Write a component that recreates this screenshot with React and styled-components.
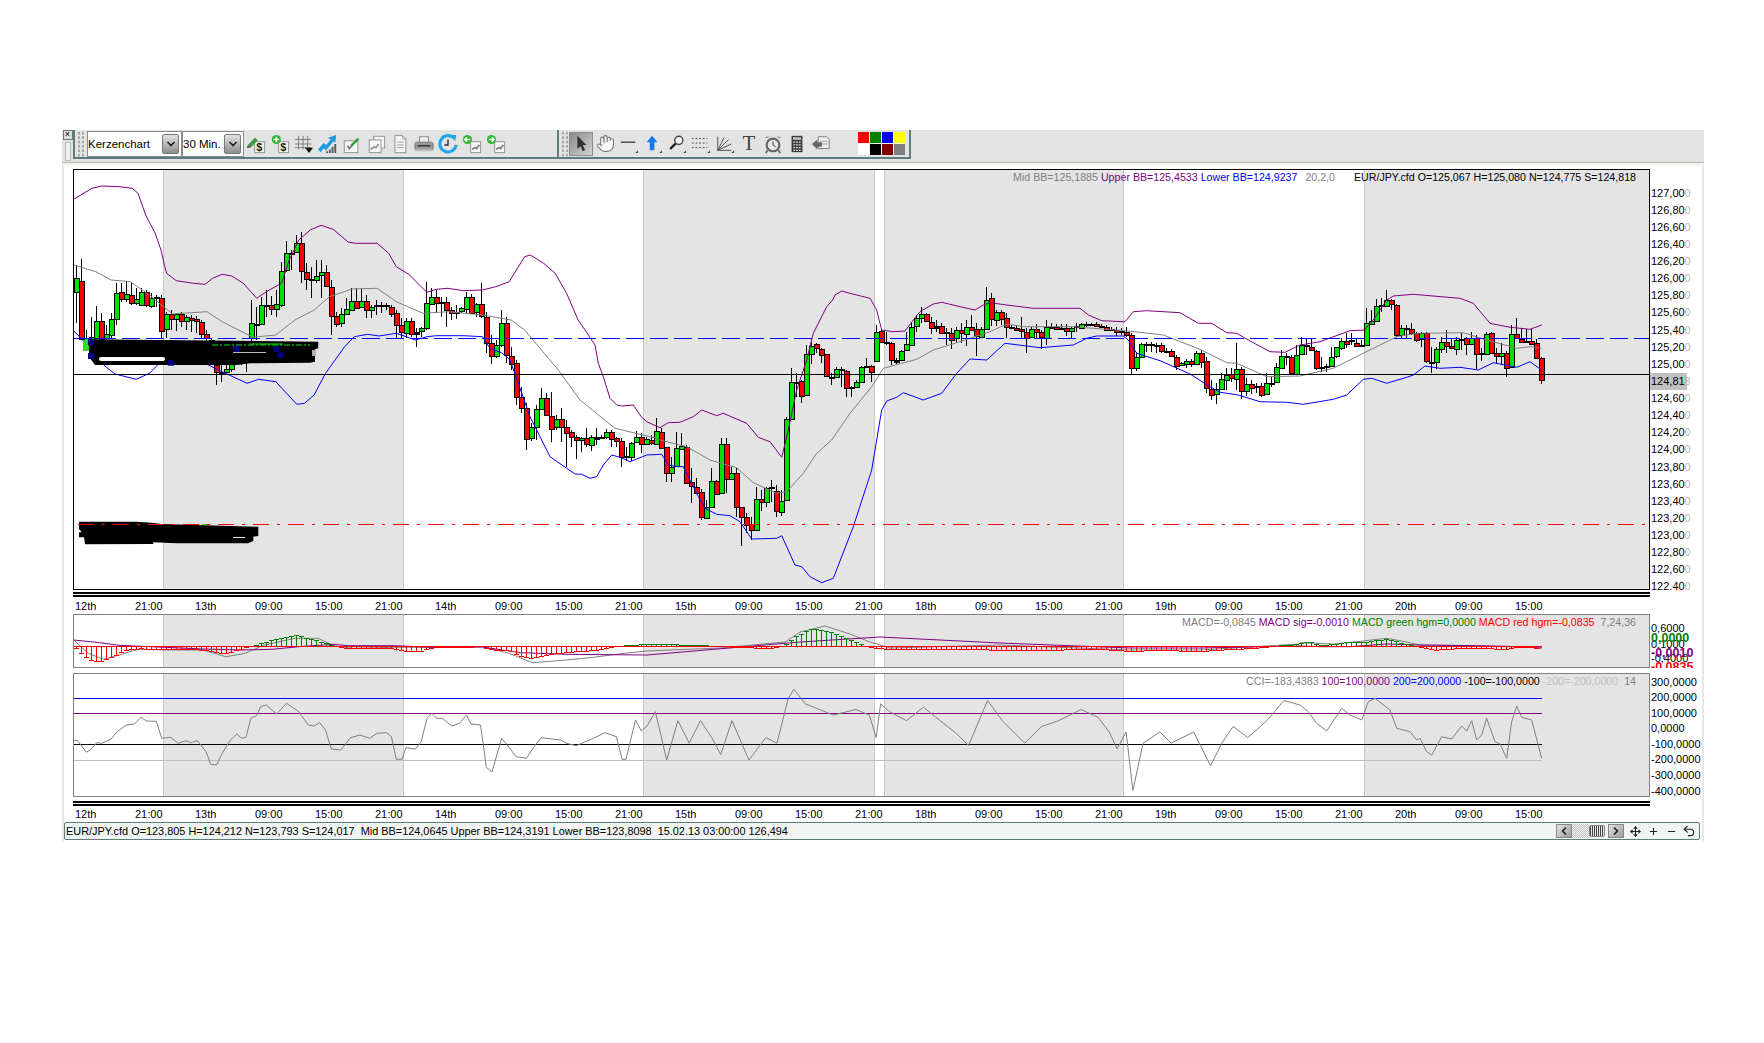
import React from "react";
import styled, { createGlobalStyle } from "styled-components";
import { ChevronDown, ChevronLeft, ChevronRight, Move, Plus, Minus, Undo2, Hand } from "lucide-react";

const GlobalStyle = createGlobalStyle`
  html, body { margin: 0; padding: 0; background: #fff; }
  body { font-family: "Liberation Sans", Arial, sans-serif; font-size: 11px; color: #000; }
`;

const Page = styled.div`
  width: 1764px;
  height: 1043px;
  padding: 130px 0 0 62px;
  box-sizing: border-box;
  overflow: hidden;
`;

const Window = styled.div`
  width: 1642px;
  display: flex;
  flex-direction: column;
`;

const Toolbar = styled.div`
  height: 32px;
  display: flex;
  align-items: flex-start;
  background: #e3e3e3;
  border-bottom: 1px solid #b8b8a8;
`;

const CloseCol = styled.div`
  width: 11px;
  display: flex;
  flex-direction: column;
  align-items: center;
  gap: 2px;
`;

const CloseBox = styled.div`
  width: 8px;
  height: 8px;
  border: 1px solid #777;
  background: #ddd;
  font-size: 9px;
  line-height: 7px;
  text-align: center;
`;

const Handle = styled.div`
  width: 4px;
  height: 17px;
  background: #efefef;
  border: 1px solid #bbb;
`;

const ToolGroup = styled.div`
  height: 29px;
  width: ${(p) => p.$w}px;
  display: flex;
  align-items: center;
  box-sizing: border-box;
  border-left: 2px solid #5e7c7a;
  border-right: ${(p) => (p.$end ? "2px solid #5e7c7a" : "none")};
  border-bottom: 2px solid #5e7c7a;
`;

const Grip = styled.div`
  width: 8px;
  height: 26px;
  margin-left: 2px;
  flex: none;
  background-image: radial-gradient(circle, #a8a8a8 1.1px, transparent 1.3px);
  background-size: 4px 4.4px;
`;

const Select = styled.div`
  height: 26px;
  width: ${(p) => p.$w}px;
  box-sizing: border-box;
  margin-left: ${(p) => p.$ml || 0}px;
  display: flex;
  align-items: center;
  justify-content: space-between;
  padding: 0 2px 0 0;
  background: #fff;
  border: 1px solid #8a8a8a;
  font-size: 11.5px;
  flex: none;
`;

const SelectArrow = styled.div`
  width: 15px;
  height: 18px;
  display: flex;
  align-items: center;
  justify-content: center;
  border: 1px solid #777;
  border-radius: 2px;
  background: linear-gradient(#e2e2e2, #8e8e8e);
`;

const Slot = styled.div`
  width: 24px;
  height: 24px;
  flex: none;
  display: flex;
  align-items: center;
  justify-content: center;
  position: relative;
`;

const ActiveSlot = styled(Slot)`
  box-sizing: border-box;
  border: 1px solid #8a8a8a;
  background: linear-gradient(135deg, #8a8a8a, #d4d4d4);
`;

const SerifT = styled.span`
  font-family: "Liberation Serif", serif;
  font-size: 21px;
  color: #444;
  line-height: 1;
`;

const Palette = styled.div`
  margin-left: 25px;
  display: grid;
  grid-template-columns: repeat(4, 11px);
  grid-auto-rows: 11px;
  gap: 1px;
  padding: 0;
  background: #f4f4f4;
`;

const Swatch = styled.div`
  background: ${(p) => p.$c};
`;

const Workspace = styled.div`
  display: flex;
  flex-direction: column;
  border-top: 3px solid #f2f2f2;
  border-left: 2px solid #e8e8e8;
  border-right: 2px solid #e8e8e8;
  padding-top: 3px;
  padding-bottom: 2px;
`;

const Charts = styled.div`
  display: flex;
  flex-direction: column;
  padding-left: 9px;
`;

const ChartRow = styled.div`
  display: flex;
  margin-top: ${(p) => p.$mt || 0}px;
`;

const Plot = styled.div`
  position: relative;
  width: 1577px;
  height: ${(p) => p.$h}px;
  flex: none;
  background: #fff;
  svg { display: block; }
  &::after {
    content: "";
    position: absolute;
    inset: 0;
    box-sizing: border-box;
    border: ${(p) => (p.$main ? "1.5px solid #000" : "1.5px solid #808080")};
    pointer-events: none;
  }
`;

const Legend = styled.div`
  position: absolute;
  top: ${(p) => p.$top}px;
  right: 14px;
  display: flex;
  gap: 3px;
  font-size: 10.65px;
  line-height: 13px;
  white-space: pre;
  z-index: 1;
`;

const Tone = styled.span`
  color: ${(p) => p.$c};
  margin-left: ${(p) => p.$ml || 0}px;
`;

const AxisCol = styled.div`
  position: relative;
  width: 52px;
  height: ${(p) => p.$h}px;
  padding-top: ${(p) => p.$pt}px;
  box-sizing: border-box;
  overflow: hidden;
  flex: none;
`;

const AxisLabel = styled.div`
  height: ${(p) => p.$step}px;
  line-height: ${(p) => p.$step}px;
  padding-left: 1px;
  white-space: pre;
  width: ${(p) => (p.$hot ? "36px" : "auto")};
  background: ${(p) => (p.$hot ? "#c0c0c0" : "transparent")};
`;

const Faint = styled.span`
  color: #b4b4b4;
  font-size: 10px;
`;

const MacdTick = styled.div`
  position: absolute;
  left: 1px;
  top: ${(p) => p.$y}px;
  line-height: 13px;
  color: ${(p) => p.$c || "#000"};
  font-weight: ${(p) => (p.$bold ? 700 : 400)};
  font-size: ${(p) => (p.$bold ? "12.5px" : "11px")};
`;

const TimeAxis = styled.div`
  width: 1577px;
  height: ${(p) => p.$h}px;
  box-sizing: border-box;
  margin-top: ${(p) => p.$mt}px;
  border-top: 5px double #000;
  display: grid;
  grid-template-columns: repeat(25, 60px);
  padding-left: 2px;
  align-items: center;
`;

const StatusBar = styled.div`
  width: 1636px;
  height: 18px;
  box-sizing: border-box;
  display: flex;
  align-items: center;
  padding: 0 1px 0 1px;
  background: #f0f4f2;
  border: 1px solid #5e7c7a;
  border-radius: 2px;
  white-space: pre;
  font-size: 10.9px;
`;

const StatusControls = styled.div`
  margin-left: auto;
  display: flex;
  align-items: center;
`;

const NavButton = styled.div`
  width: 16px;
  height: 14px;
  display: flex;
  align-items: center;
  justify-content: center;
  background: linear-gradient(135deg, #e4e4e4, #9a9a9a);
  border: 1px solid #888;
  box-sizing: border-box;
  margin-right: ${(p) => p.$mr || 0}px;
`;

const Dither = styled.div`
  width: 17px;
  height: 14px;
  background-image: repeating-conic-gradient(#c4c4c4 0 25%, #f0f4f2 0 50%);
  background-size: 2px 2px;
`;

const Thumb = styled.div`
  width: 16px;
  height: 12px;
  border: 1px solid #888;
  border-radius: 2px;
  box-sizing: border-box;
  margin-right: 3px;
  background: repeating-linear-gradient(90deg, #444 0 1px, #e8e8e8 1px 2px);
`;

const NavIcon = styled.div`
  width: 18px;
  display: flex;
  justify-content: center;
  align-items: center;
`;

// every trace below was read off at 3x, so it gets mapped back to page pixels
const trace = (pts, ox, oy, sx = 3, sy = 3) => pts.map(([x, y]) => [ox + x / sx, oy + y / sy]);
const Z1 = 2.613;

const segments = [
  { oy: 230, rows: [
    ["g",145,187,105,280],["r",152,325,88,326],["g",325,350,300,352],["g",320,370,262,372],["g",273,325,228,360],["r",272,325,250,360],
    ["g",312,325,285,340],["g",268,315,248,325],["g",190,268,160,285],["r",187,208,160,215],["g",193,208,153,215],["r",195,220,160,225],
    ["g",208,220,175,225],["g",187,225,175,228],["r",187,226,180,230],["g",203,226,190,235],["f",202,204,195,230],["r",203,301,195,325],
    ["g",253,298,245,325],["r",253,268,240,300],["g",253,268,248,303],["r",253,275,245,290],["g",262,275,255,300],["r",263,268,255,305],
    ["r",268,275,258,310],["r",275,312,270,325],["r",312,325,300,345],["g",330,360,325,380],["r",405,425,380,465],["f",425,427,380,455],
    ["g",418,428,400,430],["g",385,418,360,425],["g",350,385,345,390],["r",350,380,345,405],["r",350,380,345,425],["g",280,325,210,360],
    ["f",281,283,230,330],["g",226,283,200,285],["f",224,226,180,260],["r",226,238,198,255],["g",223,238,180,262],["g",122,223,95,230],
    ["g",70,122,33,125],["f",68,70,60,120],["g",40,68,15,70],["r",40,125,5,160],["r",125,145,100,180],["f",148,150,110,205],
    ["g",137,150,90,160],["g",127,137,90,205],["r",127,168,105,172],["r",170,257,150,315],["r",257,280,245,290],["g",253,280,235,292],
    ["g",238,253,205,255],["g",212,238,175,240],["r",212,232,175,235],["g",212,230,175,232],["r",212,240,195,265],["g",230,238,225,265],
    ["f",226,229,210,255],["f",226,229,215,250],["f",226,228,220,240],["r",230,250,225,262],["r",248,285,240,325],["r",285,306,265,325],
  ]},
  { oy: 120, rows: [
    ["g",602,637,595,655],["r",602,642,595,650],["f",637,642,625,680],["g",625,635,620,650],["g",550,625,487,630],["g",530,550,505,555],
    ["r",530,547,510,575],["f",545,548,530,590],["r",547,570,530,620],["r",570,578,560,600],["r",575,578,555,598],["g",565,575,560,580],
    ["g",530,565,515,578],["r",530,578,522,580],["g",553,578,550,590],["r",553,590,490,595],["r",592,670,575,700],
  ]},
  { oy: 330, rows: [
    ["r",40,78,15,103],["g",44,78,30,85],["g",-21,44,-60,50],["r",-21,75,-40,100],["r",77,100,50,120],["r",100,202,90,225],
    ["r",202,235,170,250],["r",235,327,220,360],["g",292,325,280,332],["g",238,292,225,330],["g",205,238,175,240],["r",205,257,190,258],
    ["r",257,295,187,335],["g",268,292,255,300],["r",268,292,235,335],["r",290,307,270,412],["r",307,322,300,352],["r",322,332,315,387],
    ["g",325,330,320,365],["r",325,343,293,350],["g",320,343,315,362],["f",320,325,293,345],["f",322,325,315,328],["g",305,320,298,328],
    ["r",305,325,300,352],["r",325,333,320,350],["r",333,382,325,410],["f",379,381,350,392],["g",338,380,335,393],["g",320,335,303,340],
    ["r",322,343,310,368],["g",328,343,322,345],["r",330,340,315,345],["g",302,342,265,345],["r",305,352,295,355],["r",352,430,350,455],
    ["g",412,430,380,457],["g",355,410,305,412],["g",347,355,308,358],["r",350,457,345,458],["r",457,470,415,518],["r",470,487,445,490],
    ["r",487,563,478,570],["g",530,563,510,568],["g",452,530,415,530],["r",452,490,450,492],["g",343,490,325,492],["r",343,448,323,488],
  ]},
  { oy: 300, rows: [
    ["g",518,535,500,536],["r",520,622,505,650],["r",622,652,620,737],["r",652,675,640,700],["r",672,690,650,720],["g",596,690,560,692],
    ["r",598,606,570,632],["g",563,606,560,620],["f",562,564,540,605],["r",572,632,555,652],["g",602,634,570,648],["g",358,602,350,603],
    ["g",247,358,205,360],["f",246,248,218,290],["r",243,287,240,310],["g",163,287,135,288],["g",138,163,125,193],["r",133,145,130,160],
    ["r",146,163,145,190],["r",163,230,162,232],["f",230,232,220,255],["g",208,232,200,233],["f",207,209,200,262],["r",212,262,210,292],
    ["f",260,262,258,290],["g",245,260,240,262],["g",200,245,198,247],["f",197,199,175,200],["r",197,214,195,245],["g",95,181,75,183],
    ["r",93,127,90,128],["f",126,128,95,135],["r",128,180,125,195],["f",180,186,175,192],["g",152,180,150,182],["g",133,152,95,153],
    ["g",80,133,65,135],["g",55,80,45,95],["g",43,55,20,70],["r",43,65,40,67],["r",65,82,50,102],["f",77,82,60,95],
    ["r",77,97,70,100],["f",95,97,85,135],["r",98,120,85,148],["g",90,115,80,125],["r",90,100,70,128],["g",80,100,60,138],
    ["r",80,88,45,90],["r",88,108,70,168],["g",88,112,80,115],["g",0,88,-40,90],["r",-5,58,-20,78],["g",35,58,30,78],
    ["r",35,55,30,75],["r",55,82,38,113],["f",80,82,75,85],["r",83,90,75,92],["r",88,93,50,115],["r",95,112,85,158],
    ["g",87,112,80,115],["r",87,97,72,117],["r",97,112,90,148],["g",80,112,60,135],["f",80,82,70,85],["r",82,88,72,90],
    ["f",83,86,72,90],["r",83,93,72,108],["g",85,93,80,115],["f",78,80,70,95],["g",73,85,68,87],["f",72,75,66,80],
    ["f",72,74,68,78],["r",73,80,66,82],["f",78,80,72,85],["r",80,88,76,92],["f",86,88,82,94],["r",90,95,80,107],
    ["f",92,94,85,105],["r",95,103,80,110],["r",105,205,98,222],["g",172,205,155,212],
  ]},
  { oy: 290, rows: [
    ["g",163,202,158,205],["f",163,166,155,185],["f",163,166,155,185],["f",164,166,158,190],["r",166,183,160,188],["f",182,184,175,190],
    ["r",182,198,178,202],["r",200,226,195,240],["g",220,226,215,228],["g",212,220,208,235],["r",212,222,207,232],["g",188,222,182,226],
    ["r",188,214,180,235],["r",214,296,200,310],["r",296,313,270,330],["g",298,313,280,342],["g",268,298,248,300],["g",254,270,235,300],
    ["r",252,265,235,275],["g",236,265,160,300],["r",236,301,230,328],["g",281,301,265,318],["r",281,292,270,312],["f",288,291,280,310],
    ["r",287,313,280,322],["g",280,313,250,315],["f",279,281,262,290],["g",232,278,220,280],["g",197,232,180,235],["f",197,200,190,225],
    ["r",202,250,195,252],["g",194,250,165,252],["g",166,194,142,196],["f",166,168,145,195],["r",170,178,145,180],["r",182,234,180,240],
    ["f",232,235,200,245],["f",228,230,222,245],["g",200,228,170,230],["g",172,200,170,203],["g",152,172,145,180],["r",152,160,130,175],
    ["f",151,153,130,165],["r",158,167,145,172],["f",164,166,150,170],["g",100,165,55,167],["g",92,100,60,102],["g",48,92,28,94],
    ["f",46,49,25,65],["g",30,48,0,50],["r",30,42,28,60],["r",44,135,42,140],["g",113,135,105,148],["f",113,115,105,148],
    ["r",118,130,98,135],["r",130,150,125,155],["g",130,148,125,170],["r",130,215,125,218],["f",215,217,170,250],["g",176,215,170,238],
    ["g",156,176,140,190],["r",156,168,120,190],["r",168,175,145,178],["g",150,178,140,195],["f",146,148,128,180],["r",145,162,140,195],
    ["g",145,163,125,165],["r",144,192,135,238],["r",188,192,175,212],["g",133,192,125,195],["r",130,190,125,192],["r",190,198,175,222],
    ["g",188,198,160,222],["r",188,232,183,262],["g",133,232,105,234],["r",133,145,85,147],["r",146,155,118,157],["f",152,154,118,158],
    ["r",152,160,118,162],["r",160,205,148,207],["r",205,272,200,282],
  ]},
];

const candles = segments.flatMap((s) =>
  s.rows.map(([kind, top, bot, hi, lo]) => ({
    kind,
    top: s.oy + top / 3,
    bot: s.oy + bot / 3,
    hi: s.oy + hi / 3,
    lo: s.oy + lo / 3,
  }))
).map((c, i) => ({ ...c, x: 76 + i * 5 }));

const upperBB = [
  ...trace([[62,238],[80,225],[110,205],[135,198],[180,200],[215,205],[230,220],[250,285],[275,340],[290,390],[300,440],[305,460],[330,482],[375,490],[405,493],[425,475],[450,463],[475,468],[505,490],[540,535],[565,515],[605,490],[625,420],[650,360],[680,330],[708,316],[740,328],[780,367],[800,370],[855,370],[885,400],[905,440],[940,465],[965,495],[985,517],[1010,508],[1040,505],[1080,512],[1130,510],[1165,500],[1200,485],[1240,410],[1255,405],[1290,430],[1320,460],[1350,520],[1380,600]], 50, 120, Z1),
  ...trace([[465,0],[495,45],[505,100],[520,140],[540,205],[560,225],[575,228],[610,225],[635,262]], 430, 330),
  ...trace([[20,365],[60,383],[85,368],[120,367],[160,350],[185,330],[230,347],[250,340],[320,370],[355,412],[390,425],[425,472],[445,390],[470,270],[500,180],[520,100],[560,20],[578,0]], 640, 300),
  ...trace([[885,525],[905,513],[930,520],[990,535],[1010,570]], 540, 120),
  ...trace([[715,50],[725,90],[760,95],[795,93],[820,60],[840,35],[880,12],[905,7],[960,20],[1005,30],[1030,15],[1050,8],[1100,15],[1180,25],[1320,25],[1345,45],[1385,62],[1450,65]], 640, 300),
  ...trace([[15,95],[40,65],[80,62],[180,68],[235,100],[275,100],[320,128],[350,130],[385,150],[450,185],[495,187],[540,165],[600,155],[690,122],[733,120],[760,90],[800,30],[820,18],[880,13],[1020,25],[1060,40],[1110,100],[1170,112],[1230,118],[1265,105]], 1120, 290),
];

const midBB = [
  ...trace([[62,435],[120,455],[160,480],[210,485],[260,525],[320,582],[410,575],[450,605],[530,652],[590,645],[640,600],[690,570],[730,530],[790,507],[855,505],[905,545],[975,580],[1040,575],[1130,585],[1205,600],[1240,630]], 50, 120, Z1),
  ...trace([[385,120],[450,210],[555,295],[680,325]], 430, 330),
  ...trace([[60,420],[140,440],[210,480],[290,503],[340,548],[410,580],[440,575],[490,520],[530,460],[575,420],[630,340],[695,260],[730,205],[830,178],[880,150],[960,125],[1050,95],[1100,72],[1150,80],[1300,80],[1450,92]], 640, 300),
  ...trace([[60,127],[130,135],[240,178],[320,218],[350,220],[440,260],[540,258],[640,235],[730,190],[830,140],[890,130],[1030,128],[1100,150],[1190,175],[1230,170],[1265,175]], 1120, 290),
];

const lowerBB = [
  ...trace([[62,632],[85,660],[110,700],[140,735],[170,762],[225,778],[260,760],[298,715],[330,700],[380,715],[440,750],[515,790],[545,778],[590,785],[645,853],[665,850],[690,825],[720,760],[770,680],[795,650],[830,643],[860,648],[905,640],[955,660],[985,650],[1010,647],[1080,647],[1130,650]], 50, 120, Z1),
  ...trace([[180,55],[215,68],[240,90],[265,160],[300,260],[330,320],[360,380],[410,415],[435,432],[455,433],[480,445],[500,440],[520,405],[545,375],[570,382],[600,395],[650,375],[695,373],[715,405],[745,410]], 430, 330),
  ...trace([[130,500],[175,590],[195,625],[230,643],[270,647],[300,665],[335,717],[410,715],[425,707],[465,795],[485,800],[510,830],[545,848],[580,835],[640,680],[695,510],[725,330],[740,303],[770,292],[790,278],[850,300],[905,280],[950,220],[990,177],[1040,180],[1095,130],[1200,143],[1300,135],[1340,115],[1370,108],[1450,108]], 640, 300),
  ...trace([[25,150],[50,190],[120,212],[210,252],[270,290],[300,307],[355,315],[420,335],[500,337],[550,343],[640,328],[680,315],[730,268],[755,265],[800,280],[860,262],[880,255],[915,228],[960,235],[1020,232],[1075,240],[1120,218],[1190,232],[1230,215],[1265,240]], 1120, 290),
];

const path = (pts) => pts.map((p) => p.map((n) => n.toFixed(1)).join(",")).join(" ");

const bands = [[163, 404], [643, 875], [884, 1124], [1364, 1650]];

const Bands = ({ y, h }) =>
  bands.map(([a, b]) => (
    <g key={a}>
      <rect x={a} y={y} width={b - a} height={h} fill="#e4e4e4" />
      <rect x={a} y={y} width={1} height={h} fill="#c8c8c8" />
      {b < 1650 && <rect x={b - 1} y={y} width={1} height={h} fill="#c8c8c8" />}
    </g>
  ));

const bodyFill = { g: "#00e000", r: "#ff0000", f: "#000" };

const Candles = () => (
  <g shapeRendering="crispEdges">
    {candles.map((c) => (
      <line key={"w" + c.x} x1={c.x + 0.5} x2={c.x + 0.5} y1={Math.round(c.hi)} y2={Math.round(c.lo)} stroke="#000" strokeWidth="1" />
    ))}
    {candles.map((c) => (
      <rect key={c.x} x={c.x - 2} y={Math.round(c.top) + 0.5} width={5} height={Math.max(1, Math.round(c.bot - c.top))} fill={bodyFill[c.kind]} stroke="#000" strokeWidth="1" />
    ))}
  </g>
);

const Scribbles = () => {
  const big = path(trace([[58,328],[745,335],[745,355],[735,358],[735,395],[720,398],[540,400],[500,405],[75,405],[60,385],[60,355]], 70, 230));
  const small = path(trace([[27,50],[200,50],[245,53],[275,57],[565,65],[565,93],[550,95],[550,108],[535,115],[320,115],[250,112],[250,117],[45,118],[42,97],[27,97],[27,82],[35,82],[27,72]], 70, 505));
  const navy = [[63,337],[63,378],[303,398],[498,357],[618,357],[632,375]];
  return (
    <g>
      <polygon points={big} fill="#000" />
      <rect x={99} y={357} width={66} height={4} rx={2} fill="#fff" />
      <rect x={83} y={340} width={6} height={11} fill="#22e022" />
      <rect x={233} y={352} width={33} height={1} fill="#b8b8b8" />
      <rect x={312} y={350} width={4} height={6} fill="#b0b0b0" />
      <line x1={212} x2={310} y1={345} y2={345} stroke="#19e019" strokeDasharray="6 2 2 2" />
      <line x1={250} x2={283} y1={344} y2={344} stroke="#19e019" />
      {navy.map(([x, y]) => (
        <rect key={x + "-" + y} x={70 + x / 3 - 3} y={230 + y / 3 - 3} width={6} height={6} fill="#000080" />
      ))}
      <polygon points={small} fill="#000" />
      <rect x={233} y={537} width={12} height={1} fill="#e8e8e8" />
      <line x1={187} x2={217} y1={524.5} y2={524.5} stroke="#19e019" strokeDasharray="6 9" />
    </g>
  );
};

const MainChart = () => (
  <svg width="1577" height="421" viewBox="73 169 1577 421">
    <Bands y={169} h={421} />
    <Candles />
    <polyline points={path(midBB)} fill="none" stroke="#808080" />
    <polyline points={path(upperBB)} fill="none" stroke="#800080" />
    <polyline points={path(lowerBB)} fill="none" stroke="#0000ff" />
    <Scribbles />
    <g shapeRendering="crispEdges">
      <line x1="74" x2="1650" y1="338.5" y2="338.5" stroke="#0000ff" strokeDasharray="18 6" />
      <line x1="74" x2="1650" y1="374.5" y2="374.5" stroke="#000" />
      <line x1="78" x2="1647" y1="524.5" y2="524.5" stroke="#ff0000" strokeDasharray="16 8 3 8" />
    </g>
  </svg>
);

const histPoints = [
  ...trace([[65,232],[85,255],[110,272],[135,272],[160,262],[185,245],[210,238],[235,235],[290,238],[330,238],[390,238],[430,245],[455,250],[480,243],[510,232],[540,225],[570,213],[600,205],[645,193],[670,203],[700,212],[740,228],[780,235],[850,235],[900,235],[920,242],[970,242],[1000,232],[1130,229],[1150,238],[1200,240],[1230,258],[1260,265],[1300,253],[1360,245],[1420,240],[1460,232],[1510,225],[1560,222]], 50, 570, Z1),
  [660,644],[700,645],[740,647],[770,648],[785,645],[795,637],[812,628],[830,632],[850,640],[870,647],[890,649],[950,649],[1030,650],[1100,649],[1130,651],[1160,650],[1200,651],[1250,648],[1299,644],
  ...trace([[0,218],[30,215],[60,225],[100,222],[150,216],[190,217],[230,210],[265,208],[320,222],[360,229],[400,240],[460,235],[540,233],[620,238],[660,230],[700,230],[725,238]], 1300, 570),
];

const sampleHist = (x) => {
  for (let i = 1; i < histPoints.length; i++) {
    const [x0, y0] = histPoints[i - 1];
    const [x1, y1] = histPoints[i];
    if (x <= x1) return y0 + ((y1 - y0) * (x - x0)) / Math.max(1, x1 - x0);
  }
  return 646;
};

const ZERO = 646;
const histBars = Array.from({ length: 293 }, (_, i) => {
  const x = 76 + i * 5;
  return { x, y: Math.round(sampleHist(x)) };
});

const macdLine = [
  ...trace([[62,210],[100,250],[140,268],[180,255],[230,238],[310,240],[400,240],[460,260],[510,250],[560,225],[640,205],[700,205],[745,228],[790,235],[900,232],[980,232],[1130,230],[1200,250],[1260,278],[1350,270],[1420,262],[1500,250],[1560,243]], 50, 570, Z1),
  [720,648],[785,642],[800,632],[825,626],[850,634],[870,642],[890,648],[1000,645],[1130,650],[1200,650],[1299,644],
  ...trace([[0,218],[100,222],[170,215],[260,205],[300,212],[360,225],[700,232],[725,236]], 1300, 570),
];

const macdSignal = [
  ...trace([[62,210],[130,218],[180,226],[220,228],[300,232],[400,237],[500,240],[580,238],[650,230],[740,223],[780,227],[900,227],[1000,232],[1080,232],[1130,231],[1230,248],[1350,253],[1560,255]], 50, 570, Z1),
  [800,642],[880,637],[1000,643],[1130,648],[1200,648],[1299,646],
  ...trace([[60,230],[150,230],[260,222],[360,225],[450,226],[580,228],[725,232]], 1300, 570),
];

const MacdChart = () => (
  <svg width="1577" height="54" viewBox="73 614 1577 54">
    <Bands y={614} h={54} />
    <polyline points={path(macdLine)} fill="none" stroke="#808080" />
    <polyline points={path(macdSignal)} fill="none" stroke="#800080" />
    <g shapeRendering="crispEdges">
      {histBars.map(({ x, y }) => (
        <g key={x} stroke={y > ZERO ? "#ff0000" : "#008000"}>
          <line x1={x + 0.5} x2={x + 0.5} y1={ZERO} y2={y} />
          <line x1={x - 2} x2={x + 3} y1={y + 0.5} y2={y + 0.5} />
        </g>
      ))}
      <line x1="74" x2="1542" y1="646.5" y2="646.5" stroke="#ff0000" strokeWidth="1" />
    </g>
  </svg>
);

const f = 1 / 0.888;
const cciLine = [
  ...trace([[62,510],[72,512],[95,547],[110,535],[122,518],[135,520],[160,507],[175,485],[200,465],[220,462],[238,442],[252,453],[278,454],[292,505],[315,502],[335,520],[355,512],[367,518],[385,512],[408,545],[420,583],[435,585],[450,550],[470,512],[488,492],[500,505],[512,502],[525,445],[540,437],[550,410],[565,405],[592,432],[618,400],[650,425],[675,465],[690,468],[705,458],[720,480],[735,537],[760,540],[785,503],[810,495],[835,505],[855,490],[880,488],[892,500],[905,568],[920,568],[930,533],[955,537],[970,515],[985,445],[998,430],[1010,445],[1025,445],[1050,468],[1070,460],[1088,435],[1100,462],[1125,465],[1133,530],[1140,592],[1155,606],[1180,505],[1195,525],[1218,560],[1245,565],[1265,530],[1283,503],[1335,510],[1350,520],[1375,527],[1420,505],[1450,488],[1480,500],[1495,568],[1505,568],[1530,450],[1545,483],[1560,468]], 50, 570, Z1),
  ...[[582,632],[592,675],[602,640],[612,660],[622,640],[632,655],[640,670],[650,640],[665,675],[680,655],[690,660],[700,620],[705,612],[715,625],[740,635],[760,630],[772,635],[778,655],[782,625],[790,632],[805,640],[820,628],[835,640],[850,652],[860,662],[877,622],[890,640],[910,660],[925,645],[940,640],[960,630],[975,637],[985,650],[992,665],[1000,650],[1006,702],[1015,660],[1030,650],[1040,660],[1060,650],[1075,680],[1085,660],[1095,645],[1108,655],[1125,640],[1140,622]].map(([x, y]) => [x * f, y * f]),
  ...trace([[0,405],[25,425],[50,460],[80,483],[125,415],[150,435],[185,450],[205,395],[225,385],[270,420],[290,475],[330,485],[350,510],[360,505],[380,545],[395,555],[425,500],[455,507],[485,468],[500,483],[515,452],[530,510],[545,495],[560,445],[585,515],[600,522],[620,565],[635,455],[650,408],[665,442],[695,450],[725,565]], 1300, 570),
];

const CciChart = () => (
  <svg width="1577" height="124" viewBox="73 673 1577 124">
    <Bands y={673} h={124} />
    <g shapeRendering="crispEdges">
      <line x1="74" x2="1542" y1="698.5" y2="698.5" stroke="#0000ff" />
      <line x1="74" x2="1542" y1="713.5" y2="713.5" stroke="#800080" />
      <line x1="74" x2="1542" y1="744.5" y2="744.5" stroke="#000" />
      <line x1="74" x2="1542" y1="760.5" y2="760.5" stroke="#c0c0c0" />
    </g>
    <polyline points={path(cciLine)} fill="none" stroke="#808080" />
  </svg>
);

const timeLabels = ["12th","21:00","13th","09:00","15:00","21:00","14th","09:00","15:00","21:00","15th","09:00","15:00","21:00","18th","09:00","15:00","21:00","19th","09:00","15:00","21:00","20th","09:00","15:00"];

const TimeRow = ({ h, mt }) => (
  <TimeAxis $h={h} $mt={mt}>
    {timeLabels.map((t, i) => (
      <span key={i}>{t}</span>
    ))}
  </TimeAxis>
);

const prices = Array.from({ length: 24 }, (_, i) => (127 - i * 0.2).toFixed(2).replace(".", ","));
const cciTicks = ["300,0000","200,0000","100,0000","0,0000","-100,0000","-200,0000","-300,0000","-400,0000"];

/* toolbar drawings */
const Ico = ({ children }) => (
  <svg width="20" height="20" viewBox="0 0 22 22">{children}</svg>
);
const Corner = () => <path d="M21 18v3h-3z" fill="#444" />;
const Sheet = ({ x = 9, y = 8, w = 11, h = 12 }) => (
  <rect x={x + 0.5} y={y + 0.5} width={w} height={h} fill="#f6f6f6" stroke="#8c8c8c" />
);
const TrendMark = () => <path d="M11 17l3-2 2 1 3-4" fill="none" stroke="#888" strokeWidth="2" />;
const Dollar = () => (
  <text x="14.5" y="18.5" fontSize="12" fontWeight="700" fontFamily="Liberation Sans, sans-serif" textAnchor="middle" fill="#222">$</text>
);

const toolsLeft = [
  <Ico><Sheet /><Dollar /><path d="M2 12l8-8 3 3-8 8z" fill="#3d9a3d" /><path d="M1 15l1-3 3 3z" fill="#444" /></Ico>,
  <Ico><Sheet /><Dollar /><circle cx="7" cy="6" r="5" fill="#2fb52f" /><path d="M7 3v6M4 6h6" stroke="#fff" strokeWidth="1.6" /></Ico>,
  <Ico><path d="M5 2v15M10 2v15M15 2v15M1 6h18M1 11h18M1 15h18" stroke="#777" strokeWidth="1" fill="none" /><path d="M12 15h9l-4.5 6z" fill="#111" /></Ico>,
  <Ico><path d="M12 21v-4h2v4zM15 21v-7h2v7zM18 21V11h2v10zM9 21v-2h2v2z" fill="#555" /><path d="M0 17l6-7 3 2 5-6-3-2 9-3-1 9-2-2-8 10-3-2-3 4z" fill="#1e9be0" /></Ico>,
  <Ico><Sheet x={2} y={7} w={15} h={13} /><path d="M6 13l2 3 3-3" fill="none" stroke="#777" strokeWidth="2" /><path d="M9 12l8-8 2 2-8 8z" fill="#35a035" /></Ico>,
  <Ico><Sheet x={8} y={2} w={12} h={13} /><Sheet x={3} y={6} w={13} h={14} /><path d="M5 17l4-3 2 1 3-4" fill="none" stroke="#999" strokeWidth="2" /></Ico>,
  <Ico><path d="M5.5 1.5h8l4 4v15h-12z" fill="#f4f4f4" stroke="#888" /><path d="M13.5 1.5v4h4M8 9h7M8 12h7M8 15h7" fill="none" stroke="#999" /></Ico>,
  <Ico><rect x="6" y="3" width="10" height="7" fill="#eee" stroke="#888" /><rect x="1" y="9" width="20" height="9" rx="2" fill="#9a9a9a" stroke="#777" /><rect x="4" y="12" width="14" height="2" fill="#444" /><rect x="1" y="17" width="20" height="2" fill="#c4c4c4" /></Ico>,
  <Ico><path d="M17 4a9 9 0 1 0 3 8" fill="none" stroke="#1ea7e8" strokeWidth="3.4" /><path d="M13 1l7 0-1 7z" fill="#1ea7e8" /><path d="M11 6v6H7" fill="none" stroke="#333" strokeWidth="1.6" /></Ico>,
  <Ico><Sheet /><TrendMark /><circle cx="6" cy="6" r="5" fill="#2fb52f" /><path d="M9 6H3M5.5 3.5L3 6l2.5 2.5" fill="none" stroke="#fff" strokeWidth="1.5" /></Ico>,
  <Ico><Sheet /><TrendMark /><circle cx="6" cy="6" r="5" fill="#2fb52f" /><path d="M3 6h6M6.5 3.5L9 6 6.5 8.5" fill="none" stroke="#fff" strokeWidth="1.5" /></Ico>,
];

const toolsRight = [
  <Ico><path d="M7 2l10 10-4 .5 2.5 5-2.500 1.500-2.500-5.500-3.500 3z" fill="#333" /></Ico>,
  <Hand size={19} color="#777" fill="#fff" strokeWidth={1.4} />,
  <Ico><path d="M2 9h16" stroke="#333" strokeWidth="1.4" /><Corner /></Ico>,
  <Ico><path d="M10 2l6 7h-3.500v9h-5V9H4z" fill="#1678ee" /><Corner /></Ico>,
  <Ico><circle cx="13" cy="7" r="4.500" fill="#f0f0f0" stroke="#444" strokeWidth="1.5" /><path d="M9.500 10.500l-6 6" stroke="#111" strokeWidth="2.4" /><Corner /></Ico>,
  <Ico><path d="M1 5h17M1 10h17M1 15h17" stroke="#444" strokeDasharray="2 2" /><Corner /></Ico>,
  <Ico><path d="M3 18V3M3 18l7-14M3 18l12-12M3 18l15-7M3 18h15" stroke="#555" strokeWidth="1.1" /><Corner /></Ico>,
  <SerifT>T</SerifT>,
  <Ico><circle cx="11" cy="12" r="7" fill="#e8e8e8" stroke="#666" strokeWidth="2.4" /><path d="M11 8v4l3 2" stroke="#333" fill="none" /><path d="M2 5a4 4 0 0 1 5-2zM20 5a4 4 0 0 0-5-2z" fill="#666" /><path d="M5 18l-2 3M17 18l2 3" stroke="#666" strokeWidth="2" /></Ico>,
  <Ico><rect x="5" y="2" width="12" height="18" fill="#3c3c3c" /><rect x="6.500" y="3.500" width="9" height="3" fill="#bbb" /><path d="M7 9h2M10 9h2M13 9h2M7 12h2M10 12h2M13 12h2M7 15h2M10 15h2M13 15h2M7 18h2M10 18h2M13 18h2" stroke="#ddd" strokeWidth="1.5" /></Ico>,
  <Ico><path d="M8 3h9l3 3v10H8z" fill="#eee" stroke="#777" /><path d="M10 8h8M10 11h8" stroke="#999" /><path d="M1 11l6-5v3h5v5H7v3z" fill="#666" /></Ico>,
];

const palette = ["#ff0000","#008000","#0000ff","#ffff00","#ffffff","#000000","#800000","#808080"];

export default function App() {
  return (
    <>
      <GlobalStyle />
      <Page>
        <Window>
          <Toolbar>
            <CloseCol>
              <CloseBox>×</CloseBox>
              <Handle />
            </CloseCol>
            <ToolGroup $w={484}>
              <Grip />
              <Select $w={95} $ml={2}>
                Kerzenchart
                <SelectArrow><ChevronDown size={12} strokeWidth={3.5} color="#222" /></SelectArrow>
              </Select>
              <Select $w={62}>
                30 Min.
                <SelectArrow><ChevronDown size={12} strokeWidth={3.5} color="#222" /></SelectArrow>
              </Select>
              {toolsLeft.map((icon, i) => (
                <Slot key={i}>{icon}</Slot>
              ))}
            </ToolGroup>
            <ToolGroup $w={354} $end>
              <Grip />
              <ActiveSlot>{toolsRight[0]}</ActiveSlot>
              {toolsRight.slice(1).map((icon, i) => (
                <Slot key={i}>{icon}</Slot>
              ))}
              <Palette>
                {palette.map((c) => (
                  <Swatch key={c} $c={c} />
                ))}
              </Palette>
            </ToolGroup>
          </Toolbar>
          <Workspace>
            <Charts>
              <ChartRow>
                <Plot $h={421} $main>
                  <Legend $top={1.5}>
                    <Tone $c="#808080">Mid BB=125,1885</Tone>
                    <Tone $c="#800080">Upper BB=125,4533</Tone>
                    <Tone $c="#0000ff">Lower BB=124,9237</Tone>
                    <Tone $c="#808080" $ml={5}>20,2,0</Tone>
                    <Tone $c="#000" $ml={16}>EUR/JPY.cfd O=125,067 H=125,080 N=124,775 S=124,818</Tone>
                  </Legend>
                  <MainChart />
                </Plot>
                <AxisCol $h={421} $pt={15.5}>
                  {prices.map((p) =>
                    p === "124,80" ? (
                      <AxisLabel key={p} $step={17.13} $hot>124,81<Faint>8</Faint></AxisLabel>
                    ) : (
                      <AxisLabel key={p} $step={17.13}>{p}<Faint>0</Faint></AxisLabel>
                    )
                  )}
                </AxisCol>
              </ChartRow>
              <TimeRow h={22} mt={2} />
              <ChartRow>
                <Plot $h={54}>
                  <Legend $top={2}>
                    <Tone $c="#808080">MACD=-0,0845</Tone>
                    <Tone $c="#800080">MACD sig=-0,0010</Tone>
                    <Tone $c="#008000">MACD green hgm=0,0000</Tone>
                    <Tone $c="#ff0000">MACD red hgm=-0,0835</Tone>
                    <Tone $c="#808080" $ml={3}>7,24,36</Tone>
                  </Legend>
                  <MacdChart />
                </Plot>
                <AxisCol $h={54} $pt={0}>
                  <MacdTick $y={8}>0,6000</MacdTick>
                  <MacdTick $y={24}>0,1000</MacdTick>
                  <MacdTick $y={38}>-0,4000</MacdTick>
                  <MacdTick $y={18} $c="#008000" $bold>0,0000</MacdTick>
                  <MacdTick $y={33} $c="#800080" $bold>-0,0010</MacdTick>
                  <MacdTick $y={47} $c="#ff0000" $bold>-0,0835</MacdTick>
                </AxisCol>
              </ChartRow>
              <ChartRow $mt={5}>
                <Plot $h={124}>
                  <Legend $top={2}>
                    <Tone $c="#808080">CCI=-183,4383</Tone>
                    <Tone $c="#800080">100=100,0000</Tone>
                    <Tone $c="#0000ff">200=200,0000</Tone>
                    <Tone $c="#000">-100=-100,0000</Tone>
                    <Tone $c="#c0c0c0">-200=-200,0000</Tone>
                    <Tone $c="#808080" $ml={3}>14</Tone>
                  </Legend>
                  <CciChart />
                </Plot>
                <AxisCol $h={124} $pt={1.5}>
                  {cciTicks.map((t) => (
                    <AxisLabel key={t} $step={15.6}>{t}</AxisLabel>
                  ))}
                </AxisCol>
              </ChartRow>
              <TimeRow h={21} mt={4} />
            </Charts>
            <StatusBar>
              EUR/JPY.cfd O=123,805 H=124,212 N=123,793 S=124,017  Mid BB=124,0645 Upper BB=124,3191 Lower BB=123,8098  15.02.13 03:00:00 126,494
              <StatusControls>
                <NavButton><ChevronLeft size={12} strokeWidth={3.5} color="#222" /></NavButton>
                <Dither />
                <Thumb />
                <NavButton $mr={2}><ChevronRight size={12} strokeWidth={3.5} color="#222" /></NavButton>
                <NavIcon><Move size={11} strokeWidth={2.4} color="#222" /></NavIcon>
                <NavIcon><Plus size={11} strokeWidth={2.2} color="#222" /></NavIcon>
                <NavIcon><Minus size={11} strokeWidth={2.2} color="#222" /></NavIcon>
                <NavIcon><Undo2 size={14} strokeWidth={2} color="#222" /></NavIcon>
              </StatusControls>
            </StatusBar>
          </Workspace>
        </Window>
      </Page>
    </>
  );
}
